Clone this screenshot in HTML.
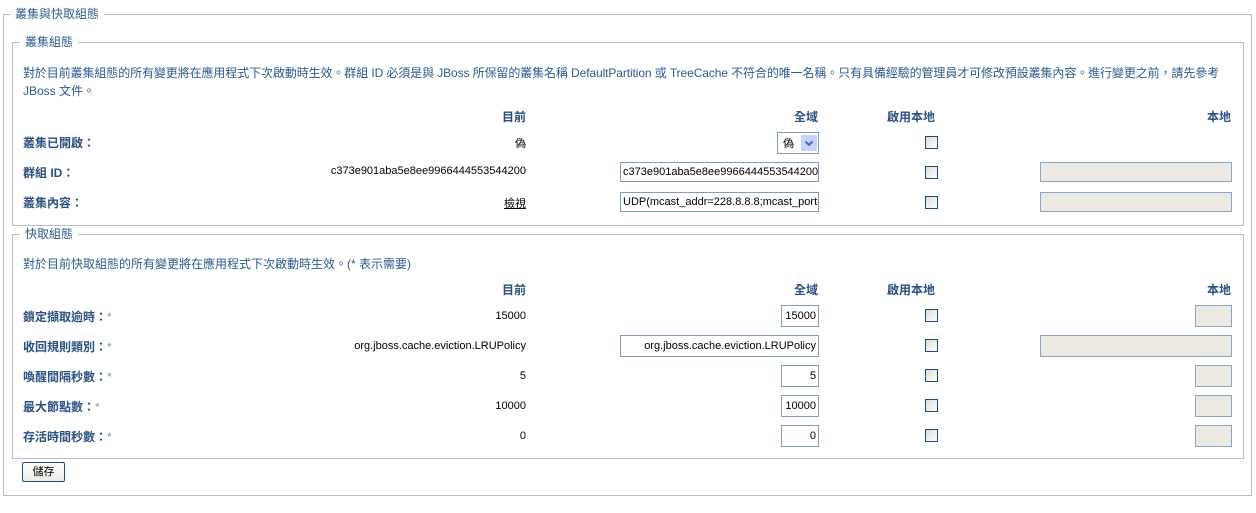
<!DOCTYPE html>
<html><head><meta charset="utf-8"><style>
body{margin:0;width:1256px;height:513px;background:#fff;position:relative;font-family:"Liberation Sans","Noto Sans CJK TC",sans-serif;font-size:11px;color:#000;overflow:hidden}
.a{position:absolute;white-space:nowrap}
.box{position:absolute;border:1px solid #bdbdbd}
.lg{position:absolute;background:#fff;padding:0 5px;color:#2d5a8e;font-size:12px;line-height:14px}
.blue{color:#2d5a8e;font-size:12px}
.h{color:#2a5082;font-weight:bold;font-size:12px}
.r{text-align:right}
.in{position:absolute;border:1px solid #7f9db9;background:#fff;height:20px;box-sizing:border-box;font-size:11px;padding:0 2px;overflow:hidden;white-space:nowrap;display:flex;align-items:center}
.in.r{justify-content:flex-end}
.dis{background:#ebe9e2;border-color:#8aa4c4}
.cb{position:absolute;width:13px;height:13px;box-sizing:border-box;border:1px solid #1c4a7a;background:linear-gradient(135deg,#dcdcd6,#fff)}
</style></head><body>
<div class="box" style="left:3px;top:14px;width:1247px;height:480px"></div>
<div class="lg" style="left:10px;top:7px">叢集與快取組態</div>
<div class="box" style="left:12px;top:42px;width:1230px;height:182px"></div>
<div class="lg" style="left:20px;top:35px">叢集組態</div>
<div class="a blue" style="left:23px;top:64px;letter-spacing:-0.1px">對於目前叢集組態的所有變更將在應用程式下次啟動時生效。群組 ID 必須是與 JBoss 所保留的叢集名稱 DefaultPartition 或 TreeCache 不符合的唯一名稱。只有具備經驗的管理員才可修改預設叢集內容。進行變更之前，請先參考</div>
<div class="a blue" style="left:23px;top:82px">JBoss 文件。</div>
<div class="a h r" style="right:730px;top:108px">目前</div>
<div class="a h r" style="right:438px;top:108px">全域</div>
<div class="a h" style="left:887px;top:108px">啟用本地</div>
<div class="a h r" style="right:25px;top:108px">本地</div>
<div class="a h" style="left:23px;top:134px">叢集已開啟：</div>
<div class="a r" style="right:730px;top:135px">偽</div>
<div class="in" style="left:777px;top:132px;width:42px;height:22px;padding-left:5px">偽<span style="position:absolute;left:23px;top:2px;width:16px;height:16px;background:#c3d3fb"><svg width="16" height="16"><path d="M4.5 6.5 L8 10 L11.5 6.5" stroke="#4a6aa8" stroke-width="2" fill="none"/></svg></span></div>
<div class="cb" style="left:925px;top:136px"></div>
<div class="a h" style="left:23px;top:164px">群組 ID：</div>
<div class="a r" style="right:730px;top:165px">c373e901aba5e8ee9966444553544200</div>
<div class="in" style="left:620px;top:162px;width:199px">c373e901aba5e8ee9966444553544200</div>
<div class="cb" style="left:925px;top:166px"></div>
<div class="in dis" style="left:1040px;top:162px;width:192px"></div>
<div class="a h" style="left:23px;top:194px">叢集內容：</div>
<div class="a r" style="right:730px;top:195px;text-decoration:underline">檢視</div>
<div class="in" style="left:620px;top:192px;width:199px">UDP(mcast_addr=228.8.8.8;mcast_port=45566)</div>
<div class="cb" style="left:925px;top:196px"></div>
<div class="in dis" style="left:1040px;top:192px;width:192px"></div>

<div class="box" style="left:12px;top:234px;width:1230px;height:223px"></div>
<div class="lg" style="left:20px;top:227px">快取組態</div>
<div class="a blue" style="left:23px;top:255px">對於目前快取組態的所有變更將在應用程式下次啟動時生效。(* 表示需要)</div>
<div class="a h r" style="right:730px;top:281px">目前</div>
<div class="a h r" style="right:438px;top:281px">全域</div>
<div class="a h" style="left:887px;top:281px">啟用本地</div>
<div class="a h r" style="right:25px;top:281px">本地</div>

<div class="a h" style="left:23px;top:308px">鎖定擷取逾時：<span style="color:#7a9ac0;font-weight:normal">*</span></div>
<div class="a r" style="right:730px;top:310px">15000</div>
<div class="in r" style="left:781px;top:305px;width:38px;height:22px">15000</div>
<div class="cb" style="left:925px;top:309px"></div>
<div class="in dis" style="left:1195px;top:305px;width:37px;height:22px"></div>

<div class="a h" style="left:23px;top:338px">收回規則類別：<span style="color:#7a9ac0;font-weight:normal">*</span></div>
<div class="a r" style="right:730px;top:340px">org.jboss.cache.eviction.LRUPolicy</div>
<div class="in r" style="left:620px;top:335px;width:199px;height:22px">org.jboss.cache.eviction.LRUPolicy</div>
<div class="cb" style="left:925px;top:339px"></div>
<div class="in dis" style="left:1040px;top:335px;width:192px;height:22px"></div>

<div class="a h" style="left:23px;top:368px">喚醒間隔秒數：<span style="color:#7a9ac0;font-weight:normal">*</span></div>
<div class="a r" style="right:730px;top:370px">5</div>
<div class="in r" style="left:781px;top:365px;width:38px;height:22px">5</div>
<div class="cb" style="left:925px;top:369px"></div>
<div class="in dis" style="left:1195px;top:365px;width:37px;height:22px"></div>

<div class="a h" style="left:23px;top:398px">最大節點數：<span style="color:#7a9ac0;font-weight:normal">*</span></div>
<div class="a r" style="right:730px;top:400px">10000</div>
<div class="in r" style="left:781px;top:395px;width:38px;height:22px">10000</div>
<div class="cb" style="left:925px;top:399px"></div>
<div class="in dis" style="left:1195px;top:395px;width:37px;height:22px"></div>

<div class="a h" style="left:23px;top:428px">存活時間秒數：<span style="color:#7a9ac0;font-weight:normal">*</span></div>
<div class="a r" style="right:730px;top:430px">0</div>
<div class="in r" style="left:781px;top:425px;width:38px;height:22px">0</div>
<div class="cb" style="left:925px;top:429px"></div>
<div class="in dis" style="left:1195px;top:425px;width:37px;height:22px"></div>

<div class="a" style="left:22px;top:462px;width:43px;height:20px;box-sizing:border-box;border:1px solid #1c4a7a;border-radius:2px;background:linear-gradient(#fff,#ecebe6);text-align:center;line-height:18px;font-size:11px">儲存</div>
</body></html>
